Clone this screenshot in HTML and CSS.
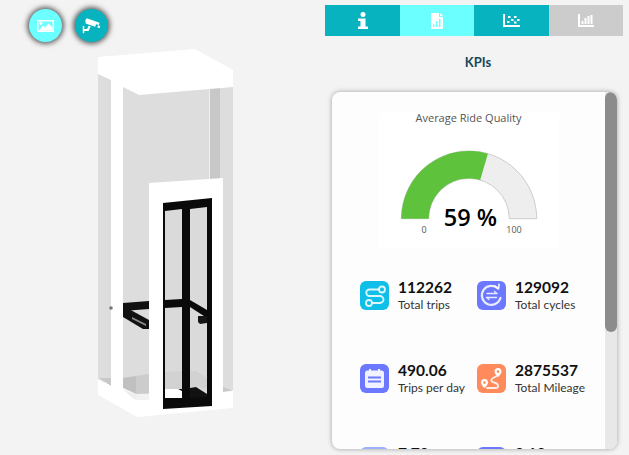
FILE: index.html
```html
<!DOCTYPE html>
<html lang="en">
<head>
    <meta charset="UTF-8">
    <meta name="viewport" content="width=device-width, initial-scale=1.0">
    <title>Elevator KPIs</title>
    <link rel="stylesheet" href="styles.css">
</head>
<body>

    <div class="viewer">
        <div class="view-buttons">
            <button class="round-btn active">
                <svg width="17" height="12" viewBox="0 0 17 12">
                    <path fill="#fff" fill-rule="evenodd" d="M0 0H17V12H0ZM1.500 1.500V10.500H15.500V1.500Z"/>
                    <path fill="#fff" d="M2 10.500 6 5.500 8 7.500 11.500 3.500 15.500 7.500V10.500Z"/>
                    <circle fill="#fff" cx="4" cy="3.500" r="1.500"/>
                </svg>
            </button>
            <button class="round-btn">
                <svg width="19" height="16" viewBox="0 0 26 22">
                    <path fill="#fff" d="M6.500 0.500 24 6.500 23 9.500 19.500 8.500 18 12 5 7.500 4.500 3Z"/>
                    <path fill="#fff" d="M22 10 25 11 24 14 21 13Z"/>
                    <path fill="#fff" d="M1 11H3V15H7L9 10.500 12 11.500 9 18H3V21H1Z"/>
                </svg>
            </button>
        </div>

        <svg class="scene" width="325" height="413" viewBox="0 42 325 413">
            <!-- back and side walls -->
            <rect x="98" y="72" width="13" height="310" fill="#dddddd"/>
            <rect x="123" y="85" width="100" height="300" fill="#dddddd"/>
            <rect x="210" y="85" width="10" height="95" fill="#c8c8c8"/>
            <rect x="209" y="85" width="1" height="95" fill="#eeeeee"/>
            <rect x="220" y="85" width="13" height="305" fill="#dddddd"/>
            <!-- floor -->
            <polygon points="99,378 111,378 111,386" fill="#c8c8c8"/>
            <polygon points="223,387 233,391 223,392" fill="#c8c8c8"/>
            <polygon points="123,378 136,376 136,394 123,388" fill="#c0c0c0"/>
            <polygon points="136,376 149,374 149,394 136,394" fill="#cccccc"/>
            <polygon points="98,379 111,386 123,388 136,394 223,392 233,391 233,408 137,417 98,395" fill="#ffffff"/>
            <polygon points="123,389 136,394 136,400 131,397" fill="#eeeeee"/>
            <polygon points="136,394 149,394 149,400 136,400" fill="#f2f2f2"/>
            <!-- left post -->
            <polygon points="111,78 123,86 123,395 111,388" fill="#ffffff"/>
            <!-- handrail behind the door panel -->
            <polygon points="123,303 149,301 149,309 123,311" fill="#111111"/>
            <polygon points="123,308 127,308 149,320 149,329 143,329 123,317" fill="#111111"/>
            <polygon points="132,317 146,324 146,326 132,319" fill="#888888"/>
            <circle cx="111" cy="308" r="1.800" fill="#777777"/>
            <!-- roof -->
            <polygon points="98,57 195,49 233,70 233,87 139,95 123,87 111,80 98,74" fill="#ffffff"/>
            <!-- door panel -->
            <polygon points="149,183 223,178 223,408 149,412" fill="#ffffff"/>
            <!-- door frame -->
            <polygon points="163,203 212,198 212,406 163,409" fill="#0a0a0a"/>
            <polygon points="165,211 182,209 182,299 165,300" fill="#dadada"/>
            <polygon points="190,209 207,207 207,310 190,300" fill="#dadada"/>
            <polygon points="165,308 182,307 182,389 165,390" fill="#dadada"/>
            <polygon points="190,307 207,318 207,396 190,396" fill="#dadada"/>
            <polygon points="198,316 207,316 207,323 200,324 198,322" fill="#151515"/>
            <polygon points="165,372 182,371 182,389 165,389" fill="#d2d2d2"/>
            <polygon points="190,371 196,371 207,378 207,388 196,387 190,388" fill="#d2d2d2"/>
            <polygon points="165,389 178,389 182,391 182,398 165,398" fill="#ffffff"/>
            <polygon points="190,388 196,387 207,394 207,397 190,398" fill="#111111"/>
        </svg>
    </div>

    <div class="panel">
        <div class="tabs">
            <div class="tab">
                <svg width="12" height="17" viewBox="0 0 12 17">
                    <circle fill="#fff" cx="6" cy="2.500" r="2.500"/>
                    <path fill="#fff" d="M1 6.500H8.500V14.500H11V17H1V14.500H3.500V9H1Z"/>
                </svg>
            </div>
            <div class="tab selected">
                <svg width="12" height="16" viewBox="0 0 12 16">
                    <path fill="#fff" d="M0 0H8V4H12V16H0Z"/>
                    <path fill="#fff" d="M9 0 12 3H9Z"/>
                    <path fill="#6cffff" d="M2 11.500H3.500V14H2ZM5 8H6.500V14H5ZM8 6H9.500V14H8Z"/>
                </svg>
            </div>
            <div class="tab">
                <svg width="17" height="13" viewBox="0 0 17 13">
                    <path fill="#fff" d="M0 0H2V11H17V13H0Z"/>
                    <path fill="#fff" d="M4 7H6.500V9H4ZM5 2H7.500V4H5ZM8 5H10.500V7H8ZM11 7.500H13.500V9.500H11ZM11 2H13.500V4H11ZM14 5H16.500V7H14Z"/>
                </svg>
            </div>
            <div class="tab disabled">
                <svg width="16" height="13" viewBox="0 0 16 13">
                    <path fill="#fff" d="M0 0H2V11H16V13H0Z"/>
                    <path fill="#fff" d="M3.500 7H5.500V10H3.500ZM6.500 4H8.500V10H6.500ZM9.500 2H11.500V10H9.500ZM12.500 1H14.500V10H12.500Z"/>
                </svg>
            </div>
        </div>

        <h2 class="panel-title">KPIs</h2>

        <div class="card">
            <div class="card-body">
                <div class="gauge">
                    <div class="gauge-title">Average Ride Quality</div>
                    <svg class="gauge-chart" width="180" height="135" viewBox="378 113 180 135">
                        <path d="M400.300 218.700A67.700 67.700 0 0 1 535.700 218.700H508.300A40.300 40.300 0 0 0 427.700 218.700Z" fill="#eeeeee" stroke="#cccccc"/>
                        <path d="M400.300 218.700A67.700 67.700 0 0 1 486.900 153.700L479.200 180A40.300 40.300 0 0 0 427.700 218.700Z" fill="#5fc23c"/>
                        <text x="469.500" y="226" class="gauge-value" text-anchor="middle">59 %</text>
                        <text x="423" y="232.500" class="gauge-label" text-anchor="middle">0</text>
                        <text x="513" y="232.500" class="gauge-label" text-anchor="middle">100</text>
                    </svg>
                </div>

                <div class="kpi-grid">
                    <div class="kpi">
                        <svg class="kpi-icon blue" viewBox="0 0 29 29">
                            <path class="line" d="M19 8.500H9.500A3.250 3.250 0 0 0 9.500 15H20A3.500 3.500 0 0 1 20 22H12"/>
                            <circle class="line" cx="22" cy="8.500" r="3"/>
                            <circle class="line" cx="9" cy="22" r="3"/>
                        </svg>
                        <div>
                            <div class="kpi-value">112262</div>
                            <div class="kpi-label">Total trips</div>
                        </div>
                    </div>
                    <div class="kpi">
                        <svg class="kpi-icon purple" viewBox="0 0 29 29">
                            <path class="line wide" d="M21 7.500A9.500 9.500 0 1 0 23.500 17"/>
                            <path class="line" d="M17.500 5 21.500 7.500 22 3.500"/>
                            <path class="line thin" d="M10 12.500H20M17.500 10.500 20 12.500M9.500 16.500H19.500M12 18.500 9.500 16.500"/>
                        </svg>
                        <div>
                            <div class="kpi-value">129092</div>
                            <div class="kpi-label">Total cycles</div>
                        </div>
                    </div>
                    <div class="kpi">
                        <svg class="kpi-icon purple" viewBox="0 0 29 29">
                            <path fill="#fff" opacity="0.9" d="M5 9A2.500 2.500 0 0 1 7.500 6.500H9V5H11V6.500H18V5H20V6.500H21.500A2.500 2.500 0 0 1 24 9V21.500A2.500 2.500 0 0 1 21.500 24H7.500A2.500 2.500 0 0 1 5 21.500Z"/>
                            <path fill="#6b78ff" d="M8 12.500H21V14.500H8ZM8 16.500H21V18.500H8Z"/>
                        </svg>
                        <div>
                            <div class="kpi-value">490.06</div>
                            <div class="kpi-label">Trips per day</div>
                        </div>
                    </div>
                    <div class="kpi">
                        <svg class="kpi-icon orange" viewBox="0 0 29 29">
                            <path class="line" d="M21 11.500 17 13.500C13 15.500 14 18 17 18.500 22 19.500 22.500 24 18.500 24H10"/>
                            <path fill="#fff" fill-rule="evenodd" d="M21 4A3.500 3.500 0 0 1 24.500 7.500C24.500 10 21 13 21 13S17.500 10 17.500 7.500A3.500 3.500 0 0 1 21 4ZM21 6.300A1.300 1.300 0 1 0 21 8.900 1.300 1.300 0 1 0 21 6.300Z"/>
                            <path fill="#fff" fill-rule="evenodd" d="M7.500 15A3.500 3.500 0 0 1 11 18.500C11 21 7.500 24 7.500 24S4 21 4 18.500A3.500 3.500 0 0 1 7.500 15ZM7.500 17.300A1.300 1.300 0 1 0 7.500 19.900 1.300 1.300 0 1 0 7.500 17.300Z"/>
                        </svg>
                        <div>
                            <div class="kpi-value">2875537</div>
                            <div class="kpi-label">Total Mileage</div>
                        </div>
                    </div>
                    <div class="kpi">
                        <svg class="kpi-icon light" viewBox="0 0 29 29"></svg>
                        <div class="kpi-value">7.70</div>
                    </div>
                    <div class="kpi">
                        <svg class="kpi-icon purple" viewBox="0 0 29 29"></svg>
                        <div class="kpi-value">0.10</div>
                    </div>
                </div>
            </div>
            <div class="scroll-track">
                <div class="scroll-thumb"></div>
            </div>
        </div>
    </div>

</body>
</html>
```

FILE: styles.css
```css
html, body {
    height: 455px;
    overflow: hidden;
}
body {
    font-family: 'Lato', 'Open Sans', sans-serif;
    display: flex;
    margin: 0;
    background-color: #f3f3f3;
}
.viewer {
    width: 325px;
    flex: none;
}
.view-buttons {
    display: flex;
    gap: 13px;
    padding: 9px 0 0 29px;
    height: 33px;
}
.round-btn {
    width: 33px;
    height: 33px;
    padding: 0;
    border: none;
    border-radius: 50%;
    background-color: #06b3bf;
    box-shadow: 0 0 5px 2px rgba(60, 60, 60, 0.8);
    display: flex;
    align-items: center;
    justify-content: center;
}
.round-btn.active {
    background-color: #6cffff;
}
.scene {
    display: block;
}
.panel {
    width: 298px;
    padding-top: 5px;
}
.tabs {
    display: grid;
    grid-template-columns: 75px 74px 75px 74px;
    height: 31px;
}
.tab {
    display: flex;
    align-items: center;
    justify-content: center;
    background-color: #06b3bf;
}
.tab.selected {
    background-color: #6cffff;
}
.tab.disabled {
    background-color: #cccccc;
}
.panel-title {
    margin: 0;
    height: 56px;
    padding-left: 8px;
    font-size: 13px;
    font-weight: 700;
    line-height: 52px;
    text-align: center;
    color: #17465a;
}
.card {
    display: flex;
    width: 285px;
    height: 357px;
    margin-left: 7px;
    border-radius: 8px;
    overflow: hidden;
    background-color: #fdfdfd;
    box-shadow: 0 0 5px rgba(0, 0, 0, 0.35);
}
.card-body {
    width: 273px;
    flex: none;
    overflow: hidden;
    padding-top: 21px;
    box-sizing: border-box;
}
.scroll-track {
    width: 12px;
    background-color: #e8e8e8;
}
.scroll-thumb {
    height: 240px;
    border-radius: 6px;
    background-color: #8c8c8c;
}
.gauge {
    position: relative;
    width: 180px;
    height: 135px;
    margin: 0 auto;
    background-color: #fff;
}
.gauge-title {
    position: absolute;
    top: -2px;
    left: 0;
    right: 0;
    font-family: 'Open Sans', sans-serif;
    font-size: 11px;
    line-height: 14px;
    text-align: center;
    color: #555;
}
.gauge-chart {
    display: block;
}
.gauge-value {
    font-family: 'Open Sans', sans-serif;
    font-size: 23.5px;
    font-weight: 600;
    fill: #000;
}
.gauge-label {
    font-family: 'Open Sans', sans-serif;
    font-size: 9px;
    fill: #555;
}
.kpi-grid {
    display: grid;
    grid-template-columns: 117px 117px;
    grid-auto-rows: 83px;
    margin-top: 33px;
    padding-left: 28px;
}
.kpi {
    display: flex;
    gap: 9px;
}
.kpi-icon {
    width: 29px;
    height: 29px;
    flex: none;
    border-radius: 6px;
}
.kpi-icon.blue {
    background-color: #0fbfe8;
}
.kpi-icon.purple {
    background-color: #6b78ff;
}
.kpi-icon.orange {
    background-color: #ff8a5c;
}
.kpi-icon.light {
    background-color: #9bb0ff;
}
.line {
    fill: none;
    stroke: #fff;
    stroke-opacity: 0.85;
    stroke-width: 1.800;
    stroke-linecap: round;
    stroke-linejoin: round;
}
.line.thin {
    stroke-width: 1.300;
}
.line.wide {
    stroke-width: 2.200;
}
.kpi-value {
    margin-top: -4px;
    font-size: 15.5px;
    font-weight: 700;
    line-height: 20px;
    color: #111;
}
.kpi-label {
    margin-top: 1px;
    font-size: 12px;
    line-height: 14px;
    color: #333;
    white-space: nowrap;
}
```
